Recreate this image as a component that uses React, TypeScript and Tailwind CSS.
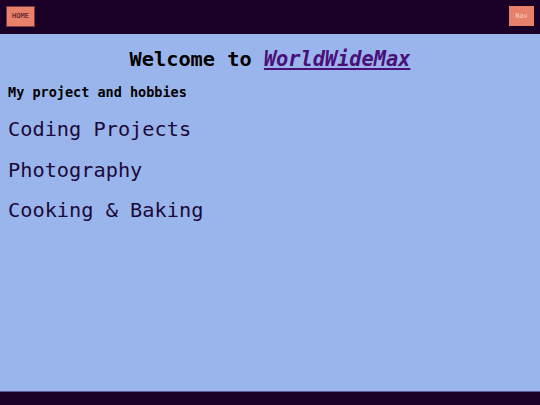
export default function App() {
  const hobbies = ['Coding Projects', 'Photography', 'Cooking & Baking'];

  return (
    <div
      className="flex h-[405px] w-[540px] flex-col bg-[#9ab5ec]"
      style={{ fontFamily: '"DejaVu Sans Mono", monospace' }}
    >
      {/* Top bar */}
      <header className="flex h-[34px] items-start justify-between bg-[#1a0026] px-[6px] pt-[6px]">
        <button className="flex h-[21px] w-[29px] items-center justify-center border border-[#7a3a44] bg-[#e8806a] text-[7px] text-[#3a0a20]">
          HOME
        </button>
        <button className="flex h-[20px] w-[25px] items-center justify-center bg-[#e8806a] text-[7px] text-[#f6d0c8]">
          Nav
        </button>
      </header>

      {/* Main content */}
      <main className="flex-1 px-[8px]">
        <h1 className="mt-[12px] text-center text-[20.3px] font-bold leading-[26px] text-black">
          Welcome to{' '}
          <a href="#" className="italic text-[#4b0f7a] underline">
            WorldWideMax
          </a>
        </h1>
        <h2 className="mt-[11px] text-[13.5px] font-bold leading-[18px] text-black">
          My project and hobbies
        </h2>
        <ul className="mt-[15px] flex flex-col gap-[14.5px] text-[20.3px] leading-[26px] text-[#1a0a3a]">
          {hobbies.map((h) => (
            <li key={h}>{h}</li>
          ))}
        </ul>
      </main>

      {/* Footer */}
      <footer className="h-[14px] border-t border-[#5a5a9a] bg-[#1a0026]" />
    </div>
  );
}
